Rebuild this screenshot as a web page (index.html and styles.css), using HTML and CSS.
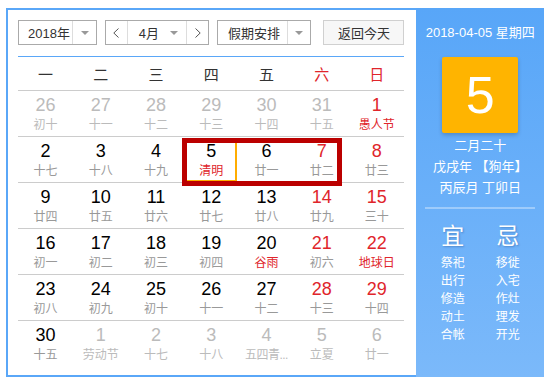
FILE: index.html
```html
<!DOCTYPE html>
<html lang="zh-CN">
<head>
    <meta charset="UTF-8">
    <title>万年历</title>
    <link rel="stylesheet" href="styles.css">
</head>
<body>
    <div class="calendar">
        <div class="main">
            <div class="toolbar">
                <div class="select year">
                    <span class="select-text">2018年</span>
                    <span class="select-arrow"><i class="tri"></i></span>
                </div>
                <div class="select month">
                    <span class="nav-btn">
                        <svg width="6" height="10" viewBox="0 0 6 10"><polyline points="5.5,0.5 0.8,5 5.5,9.5" fill="none" stroke="#555" stroke-width="1"/></svg>
                    </span>
                    <span class="month-text">4月<i class="tri"></i></span>
                    <span class="nav-btn next">
                        <svg width="6" height="10" viewBox="0 0 6 10"><polyline points="0.5,0.5 5.2,5 0.5,9.5" fill="none" stroke="#555" stroke-width="1"/></svg>
                    </span>
                </div>
                <div class="select holiday">
                    <span class="select-text">假期安排</span>
                    <span class="select-arrow"><i class="tri"></i></span>
                </div>
                <button class="today-btn">返回今天</button>
            </div>

            <div class="week-head">
                <span>一</span><span>二</span><span>三</span><span>四</span><span>五</span>
                <span class="red">六</span><span class="red">日</span>
            </div>

            <div class="days">
                <div class="row">
                    <div class="cell other"><b>26</b><em>初十</em></div>
                    <div class="cell other"><b>27</b><em>十一</em></div>
                    <div class="cell other"><b>28</b><em>十二</em></div>
                    <div class="cell other"><b>29</b><em>十三</em></div>
                    <div class="cell other"><b>30</b><em>十四</em></div>
                    <div class="cell other"><b>31</b><em>十五</em></div>
                    <div class="cell weekend"><b>1</b><em class="fest">愚人节</em></div>
                </div>
                <div class="row">
                    <div class="cell"><b>2</b><em>十七</em></div>
                    <div class="cell"><b>3</b><em>十八</em></div>
                    <div class="cell"><b>4</b><em>十九</em></div>
                    <div class="cell"><b>5</b><em class="fest">清明</em></div>
                    <div class="cell"><b>6</b><em>廿一</em></div>
                    <div class="cell weekend"><b>7</b><em>廿二</em></div>
                    <div class="cell weekend"><b>8</b><em>廿三</em></div>
                </div>
                <div class="row">
                    <div class="cell"><b>9</b><em>廿四</em></div>
                    <div class="cell"><b>10</b><em>廿五</em></div>
                    <div class="cell"><b>11</b><em>廿六</em></div>
                    <div class="cell"><b>12</b><em>廿七</em></div>
                    <div class="cell"><b>13</b><em>廿八</em></div>
                    <div class="cell weekend"><b>14</b><em>廿九</em></div>
                    <div class="cell weekend"><b>15</b><em>三十</em></div>
                </div>
                <div class="row">
                    <div class="cell"><b>16</b><em>初一</em></div>
                    <div class="cell"><b>17</b><em>初二</em></div>
                    <div class="cell"><b>18</b><em>初三</em></div>
                    <div class="cell"><b>19</b><em>初四</em></div>
                    <div class="cell"><b>20</b><em class="fest">谷雨</em></div>
                    <div class="cell weekend"><b>21</b><em>初六</em></div>
                    <div class="cell weekend"><b>22</b><em class="fest">地球日</em></div>
                </div>
                <div class="row">
                    <div class="cell"><b>23</b><em>初八</em></div>
                    <div class="cell"><b>24</b><em>初九</em></div>
                    <div class="cell"><b>25</b><em>初十</em></div>
                    <div class="cell"><b>26</b><em>十一</em></div>
                    <div class="cell"><b>27</b><em>十二</em></div>
                    <div class="cell weekend"><b>28</b><em>十三</em></div>
                    <div class="cell weekend"><b>29</b><em>十四</em></div>
                </div>
                <div class="row last">
                    <div class="cell"><b>30</b><em>十五</em></div>
                    <div class="cell other"><b>1</b><em>劳动节</em></div>
                    <div class="cell other"><b>2</b><em>十七</em></div>
                    <div class="cell other"><b>3</b><em>十八</em></div>
                    <div class="cell other"><b>4</b><em class="short">五四青...</em></div>
                    <div class="cell other"><b>5</b><em>立夏</em></div>
                    <div class="cell other"><b>6</b><em>廿一</em></div>
                </div>

                <!-- selected day + holiday range -->
                <div class="today-mark"></div>
                <div class="holiday-range"></div>
            </div>
        </div>

        <div class="side">
            <div class="side-date">2018-04-05 星期四</div>
            <div class="big-day">5</div>
            <div class="lunar">
                <p>二月二十</p>
                <p>戊戌年 【狗年】</p>
                <p>丙辰月 丁卯日</p>
            </div>
            <div class="side-line"></div>
            <div class="almanac">
                <div class="col">
                    <h3>宜</h3>
                    <p>祭祀</p><p>出行</p><p>修造</p><p>动土</p><p>合帐</p>
                </div>
                <div class="col">
                    <h3>忌</h3>
                    <p>移徙</p><p>入宅</p><p>作灶</p><p>理发</p><p>开光</p>
                </div>
            </div>
        </div>
    </div>
</body>
</html>
```

FILE: styles.css
```css
body { margin: 0; padding: 8px 7px 6px 6px; font-family: "Liberation Sans", Arial, "Noto Sans CJK SC", sans-serif; color: #333; }

.calendar { display: flex; width: 538px; height: 369px; }

.main { width: 394px; height: 355px; padding: 10px 12px 0 10px; border: 2px solid #5aa7f8; border-right: 0; }

/* toolbar */
.toolbar { display: flex; height: 25px; gap: 8px; }
.select { display: flex; height: 25px; box-sizing: border-box; border: 1px solid #aaa; background: #fff; font-size: 13px; color: #333; }
.select-text { display: flex; align-items: center; padding-left: 9px; }
.select-arrow { display: flex; align-items: center; justify-content: center; width: 23px; border-left: 1px solid #ddd; }
.tri { display: inline-block; width: 0; height: 0; border-left: 4px solid transparent; border-right: 4px solid transparent; border-top: 4px solid #999; }
.year { width: 79px; }
.year .select-text { width: 45px; }
.month { width: 104px; }
.nav-btn { display: flex; align-items: center; justify-content: center; width: 21px; }
.nav-btn.next { border-left: 1px solid #ddd; }
.month-text { display: flex; align-items: center; justify-content: space-between; width: 40px; padding: 0 8px 0 11px; border-left: 1px solid #ddd; }
.holiday { width: 94px; }
.holiday .select-text { width: 60px; padding-left: 10px; }
.today-btn { margin-left: auto; width: 81px; height: 25px; border: 1px solid #d0d0d0; background: #f7f7f7; font: 13px "Liberation Sans", "Noto Sans CJK SC", sans-serif; color: #333; padding: 0; }

/* weekday header */
.week-head { display: grid; grid-template-columns: repeat(7, 1fr); margin-top: 11px; border-top: 1px solid #5aa7f8; border-bottom: 1px solid #ccc; height: 33px; align-items: center; text-align: center; font-size: 15px; color: #333; }
.week-head .red { color: #e0252b; }

/* day grid */
.days { position: relative; }
.row { display: grid; grid-template-columns: repeat(7, 1fr); height: 45px; border-bottom: 1px solid #ccc; }
.row.last { border-bottom: 0; }
.cell { display: flex; flex-direction: column; align-items: center; min-width: 0; }
.cell b { font-weight: normal; font-size: 18px; line-height: 20px; margin-top: 4px; color: #000; }
.cell em { font-style: normal; font-size: 12px; line-height: 16px; margin-top: 2px; color: #999; white-space: nowrap; }
.cell em.short { letter-spacing: -0.5px; }
.cell em.fest { color: #e0252b; }
.cell.weekend b { color: #e0252b; }
.cell.other b, .cell.other em { color: #bbb; }
.cell.other em.fest { color: #e0252b; }

.today-mark { position: absolute; left: 164px; top: 47px; width: 51px; height: 40px; border: 2px solid #ffad00; }
.holiday-range { position: absolute; left: 164px; top: 47px; width: 150px; height: 38px; border: 5px solid #bb0000; }

/* right panel */
.side { width: 130px; height: 369px; background: linear-gradient(#58a6f8, #7bb9fa); color: #fff; text-align: center; padding-top: 15px; box-sizing: border-box; }
.side-date { font-size: 13px; line-height: 20px; }
.big-day { width: 76px; height: 76px; margin: 14px auto 0; background: #ffb400; border-radius: 2px; box-shadow: 0 2px 4px rgba(0, 0, 0, 0.2); font-size: 52px; line-height: 76px; }
.lunar { margin-top: 2px; font-size: 13px; }
.lunar p { margin: 0; line-height: 21px; }
.side-line { width: 110px; height: 2px; margin: 9px auto 0; background: rgba(255, 255, 255, 0.35); }
.almanac { display: flex; width: 110px; margin: 12px auto 0; }
.almanac .col { flex: 1; }
.almanac h3 { margin: 0 0 3px; font-size: 23px; line-height: 30px; font-weight: normal; text-shadow: 1px 1px 2px rgba(0, 40, 100, 0.3); }
.almanac p { margin: 0; font-size: 12px; line-height: 18px; }
```
